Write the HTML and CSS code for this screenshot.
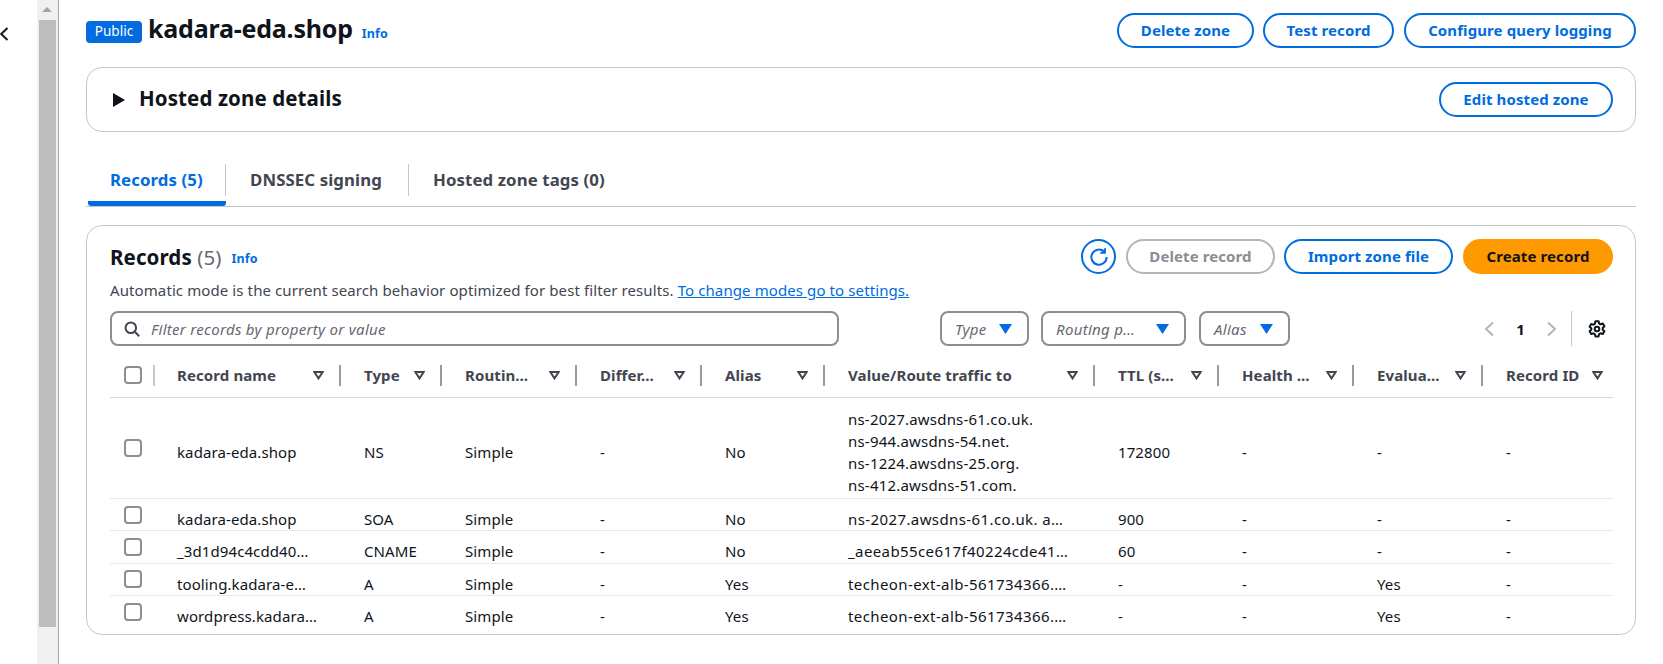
FILE: index.html
```html
<!DOCTYPE html>
<html lang="en">
<head>
<meta charset="utf-8">
<title>kadara-eda.shop</title>
<link rel="stylesheet" href="styles.css">
</head>
<body>
<div class="page">
  <div class="rail">
    <svg class="back" width="9" height="14" viewBox="0 0 9 14"><path d="M7.5 1 1.2 7l6.3 6" fill="none" stroke="#16191f" stroke-width="2"/></svg>
  </div>
  <div class="scrollbar">
    <div class="sb-arrow"></div>
    <div class="sb-thumb"></div>
  </div>
  <main class="main">
    <header class="top">
      <span class="badge">Public</span>
      <h1 class="title">kadara-eda.shop</h1>
      <a class="info info-top">Info</a>
      <div class="top-actions">
        <button class="btn w-delzone">Delete zone</button>
        <button class="btn w-test">Test record</button>
        <button class="btn w-config">Configure query logging</button>
      </div>
    </header>

    <section class="details">
      <svg class="caret" width="12" height="14" viewBox="0 0 12 14"><path d="M0 0 12 7 0 14Z" fill="#0f141a"/></svg>
      <h2 class="details-title">Hosted zone details</h2>
      <button class="btn w-edit">Edit hosted zone</button>
    </section>

    <nav class="tabs">
      <a class="tab tab-active tab-a"><span class="tab-label">Records (5)</span></a>
      <a class="tab tab-b"><span class="tab-label">DNSSEC signing</span></a>
      <a class="tab tab-c"><span class="tab-label">Hosted zone tags (0)</span></a>
    </nav>

    <section class="records">
      <div class="rec-head">
        <div class="rec-title-wrap">
          <h2 class="rec-title">Records <span class="rec-count">(5)</span></h2>
          <a class="info info-rec">Info</a>
        </div>
        <div class="rec-actions">
          <button class="icon-btn" aria-label="Refresh">
            <svg width="20" height="20" viewBox="0 0 20 20"><path d="M15.2 4.6A7.6 7.6 0 1 0 17.6 10" fill="none" stroke="#006ce0" stroke-width="2"/><path d="M15.9 1.2v4.6h-4.6" fill="none" stroke="#006ce0" stroke-width="2"/></svg>
          </button>
          <button class="btn btn-disabled w-delrec">Delete record</button>
          <button class="btn w-import">Import zone file</button>
          <button class="btn btn-primary w-create">Create record</button>
        </div>
      </div>
      <p class="rec-desc">Automatic mode is the current search behavior optimized for best filter results. <a class="link">To change modes go to settings.</a></p>
      <div class="filters">
        <div class="search">
          <svg width="16" height="16" viewBox="0 0 16 16"><circle cx="6.8" cy="6.8" r="5.3" fill="none" stroke="#424650" stroke-width="2"/><path d="m10.8 10.8 4.4 4.4" stroke="#424650" stroke-width="2"/></svg>
          <span class="placeholder">Filter records by property or value</span>
        </div>
        <div class="select w-type"><span class="placeholder">Type</span><svg class="tri" width="13" height="10" viewBox="0 0 13 10"><path d="M0 0h13L6.5 10Z" fill="#006ce0"/></svg></div>
        <div class="select w-routing"><span class="placeholder">Routing p…</span><svg class="tri" width="13" height="10" viewBox="0 0 13 10"><path d="M0 0h13L6.5 10Z" fill="#006ce0"/></svg></div>
        <div class="select w-alias"><span class="placeholder">Alias</span><svg class="tri" width="13" height="10" viewBox="0 0 13 10"><path d="M0 0h13L6.5 10Z" fill="#006ce0"/></svg></div>
        <div class="pager">
          <svg width="12" height="16" viewBox="0 0 12 16"><path d="M10 1.5 3 8l7 6.5" fill="none" stroke="#b4b4bb" stroke-width="2"/></svg>
          <span class="page-num">1</span>
          <svg width="12" height="16" viewBox="0 0 12 16"><path d="M2 1.5 9 8l-7 6.5" fill="none" stroke="#b4b4bb" stroke-width="2"/></svg>
          <span class="pager-sep"></span>
          <svg class="gear" width="18" height="18" viewBox="0 0 18 18"><path d="M7.4 1.2h3.2l.5 2.3 1.5.8 2.2-.8 1.6 2.8-1.7 1.6v1.8l1.7 1.6-1.6 2.8-2.2-.8-1.5.8-.5 2.3H7.4l-.5-2.3-1.5-.8-2.2.8-1.6-2.8 1.7-1.6V8.3L1.6 6.7l1.6-2.8 2.2.8 1.5-.8Z" fill="none" stroke="#0f141a" stroke-width="2" stroke-linejoin="round"/><circle cx="9" cy="9" r="2.3" fill="none" stroke="#0f141a" stroke-width="2"/></svg>
        </div>
      </div>
      <table class="table">
        <colgroup>
          <col class="c-check"><col class="c-name"><col class="c-type"><col class="c-routing"><col class="c-diff"><col class="c-alias"><col class="c-value"><col class="c-ttl"><col class="c-health"><col class="c-eval"><col class="c-id">
        </colgroup>
        <thead>
          <tr>
            <th><div class="th-in th-check"><span class="cb"></span></div></th>
            <th><div class="th-in"><span>Record name</span><svg class="sort" width="11" height="9" viewBox="0 0 11 9"><path d="M1.3 1h8.4L5.5 7.4Z" fill="none" stroke="#424650" stroke-width="2"/></svg></div></th>
            <th><div class="th-in"><span>Type</span><svg class="sort" width="11" height="9" viewBox="0 0 11 9"><path d="M1.3 1h8.4L5.5 7.4Z" fill="none" stroke="#424650" stroke-width="2"/></svg></div></th>
            <th><div class="th-in"><span>Routin…</span><svg class="sort" width="11" height="9" viewBox="0 0 11 9"><path d="M1.3 1h8.4L5.5 7.4Z" fill="none" stroke="#424650" stroke-width="2"/></svg></div></th>
            <th><div class="th-in"><span>Differ…</span><svg class="sort" width="11" height="9" viewBox="0 0 11 9"><path d="M1.3 1h8.4L5.5 7.4Z" fill="none" stroke="#424650" stroke-width="2"/></svg></div></th>
            <th><div class="th-in"><span>Alias</span><svg class="sort" width="11" height="9" viewBox="0 0 11 9"><path d="M1.3 1h8.4L5.5 7.4Z" fill="none" stroke="#424650" stroke-width="2"/></svg></div></th>
            <th><div class="th-in"><span>Value/Route traffic to</span><svg class="sort" width="11" height="9" viewBox="0 0 11 9"><path d="M1.3 1h8.4L5.5 7.4Z" fill="none" stroke="#424650" stroke-width="2"/></svg></div></th>
            <th><div class="th-in"><span>TTL (s…</span><svg class="sort" width="11" height="9" viewBox="0 0 11 9"><path d="M1.3 1h8.4L5.5 7.4Z" fill="none" stroke="#424650" stroke-width="2"/></svg></div></th>
            <th><div class="th-in"><span>Health …</span><svg class="sort" width="11" height="9" viewBox="0 0 11 9"><path d="M1.3 1h8.4L5.5 7.4Z" fill="none" stroke="#424650" stroke-width="2"/></svg></div></th>
            <th><div class="th-in"><span>Evalua…</span><svg class="sort" width="11" height="9" viewBox="0 0 11 9"><path d="M1.3 1h8.4L5.5 7.4Z" fill="none" stroke="#424650" stroke-width="2"/></svg></div></th>
            <th><div class="th-in th-last"><span>Record ID</span><svg class="sort" width="11" height="9" viewBox="0 0 11 9"><path d="M1.3 1h8.4L5.5 7.4Z" fill="none" stroke="#424650" stroke-width="2"/></svg></div></th>
          </tr>
        </thead>
        <tbody>
          <tr>
            <td class="td-check"><span class="cb"></span></td>
            <td>kadara-eda.shop</td><td>NS</td><td>Simple</td><td>-</td><td>No</td>
            <td class="td-multi">ns-2027.awsdns-61.co.uk.<br>ns-944.awsdns-54.net.<br>ns-1224.awsdns-25.org.<br>ns-412.awsdns-51.com.</td>
            <td>172800</td><td>-</td><td>-</td><td>-</td>
          </tr>
          <tr>
            <td class="td-check"><span class="cb"></span></td>
            <td>kadara-eda.shop</td><td>SOA</td><td>Simple</td><td>-</td><td>No</td>
            <td class="td-value">ns-2027.awsdns-61.co.uk. a…</td>
            <td>900</td><td>-</td><td>-</td><td>-</td>
          </tr>
          <tr>
            <td class="td-check"><span class="cb"></span></td>
            <td>_3d1d94c4cdd40…</td><td>CNAME</td><td>Simple</td><td>-</td><td>No</td>
            <td class="td-value">_aeeab55ce617f40224cde41…</td>
            <td>60</td><td>-</td><td>-</td><td>-</td>
          </tr>
          <tr>
            <td class="td-check"><span class="cb"></span></td>
            <td>tooling.kadara-e…</td><td>A</td><td>Simple</td><td>-</td><td>Yes</td>
            <td class="td-value">techeon-ext-alb-561734366.…</td>
            <td>-</td><td>-</td><td>Yes</td><td>-</td>
          </tr>
          <tr class="row-last">
            <td class="td-check"><span class="cb"></span></td>
            <td>wordpress.kadara…</td><td>A</td><td>Simple</td><td>-</td><td>Yes</td>
            <td class="td-value">techeon-ext-alb-561734366.…</td>
            <td>-</td><td>-</td><td>Yes</td><td>-</td>
          </tr>
        </tbody>
      </table>
    </section>
  </main>
</div>
</body>
</html>
```

FILE: styles.css
```css
* { box-sizing: border-box; }
html, body { margin: 0; padding: 0; background: #fff; }
body {
  font-family: "Noto Sans", "Open Sans", sans-serif;
  font-size: 15px;
  line-height: 20px;
  letter-spacing: 0.1px;
  color: #0f141a;
}
h1, h2, p { margin: 0; }
button { font-family: inherit; letter-spacing: inherit; cursor: pointer; }

.page { display: flex; width: 1663px; height: 664px; overflow: hidden; }

.rail { width: 37px; flex: none; padding-top: 27px; }
.back { display: block; }

.scrollbar {
  width: 22px;
  flex: none;
  background: #f0f0f0;
  border-right: 1px solid #a9a9a9;
  display: flex;
  flex-direction: column;
  align-items: flex-start;
}
.sb-arrow {
  flex: none;
  width: 0;
  height: 12px;
  margin: 0 0 8px 5px;
  border-left: 5px solid transparent;
  border-right: 5px solid transparent;
  border-bottom: 5px solid #a3a3a3;
  border-top: 7px solid transparent;
}
.sb-thumb { width: 17px; height: 607px; margin-left: 2px; background: #bdbdbd; }

.main { width: 1550px; margin-left: 27px; flex: none; }

/* Header */
.top { display: flex; align-items: center; height: 35px; margin-top: 13px; }
.badge {
  width: 56px;
  height: 22px;
  background: #006ce0;
  color: #fff;
  border-radius: 4px;
  font-size: 13.5px;
  line-height: 20px;
  letter-spacing: 0;
  text-align: center;
  margin: 2px 6px 0 0;
}
.title { font-size: 25px; line-height: 30px; font-weight: 700; letter-spacing: -0.2px; margin-top: -5px; }
.info { color: #006ce0; font-weight: 700; font-size: 12.5px; line-height: 16px; }
.info-top { margin-left: 9px; margin-top: 6px; }
.top-actions { margin-left: auto; display: flex; gap: 9px; }

.btn {
  height: 35px;
  border: 2px solid #006ce0;
  border-radius: 18px;
  background: #fff;
  color: #006ce0;
  font-size: 15px;
  font-weight: 700;
  line-height: 20px;
  padding: 0 0 2px;
  white-space: nowrap;
  text-align: center;
}
.w-delzone { width: 137px; }
.w-test { width: 131px; margin-right: 1px; }
.w-config { width: 232px; }
.w-edit { width: 174px; margin-left: auto; }
.w-delrec { width: 149px; }
.w-import { width: 169px; margin-right: 1px; }
.w-create { width: 150px; }
.btn-disabled { border-color: #b4b4bb; color: #8c8c94; }
.btn-primary { background: #ff9900; border-color: #ff9900; color: #0f141a; }

/* Details panel */
.details {
  display: flex;
  align-items: center;
  height: 65px;
  margin-top: 19px;
  padding: 0 22px 0 26px;
  border: 1px solid #c6c6cd;
  border-radius: 16px;
}
.caret { flex: none; }
.details-title { font-size: 20.5px; line-height: 24px; font-weight: 700; margin: 0 0 3px 14px; }

/* Tabs */
.tabs { display: flex; height: 75px; padding-top: 32px; border-bottom: 1px solid #c6c6cd; }
.tab { display: block; height: 42px; }
.tab-label {
  display: block;
  height: 32px;
  line-height: 32px;
  font-size: 16.8px;
  font-weight: 700;
  color: #424650;
  padding-left: 24px;
  white-space: nowrap;
}
.tab-a { width: 138px; border-bottom: 5px solid #006ce0; border-radius: 0 0 3px 3px; margin-left: 2px; }
.tab-a .tab-label { color: #006ce0; border-right: 1px solid #c6c6cd; padding-left: 22px; }
.tab-b { width: 183px; }
.tab-b .tab-label { border-right: 1px solid #c6c6cd; }
.tab-c { width: 240px; }

/* Records */
.records {
  margin-top: 18px;
  height: 410px;
  border: 1px solid #c6c6cd;
  border-radius: 16px;
  padding: 13px 22px 0 23px;
}
.rec-head { display: flex; justify-content: space-between; align-items: flex-start; height: 35px; }
.rec-title-wrap { display: flex; align-items: center; height: 35px; }
.rec-title { font-size: 20.5px; line-height: 24px; font-weight: 700; }
.rec-count { font-weight: 400; color: #656871; }
.info-rec { margin-left: 10px; margin-top: 4px; }
.rec-actions { display: flex; gap: 9px; }
.icon-btn {
  width: 35px;
  height: 35px;
  padding: 0;
  margin-right: 1px;
  border: 2px solid #006ce0;
  border-radius: 50%;
  background: #fff;
  display: flex;
  align-items: center;
  justify-content: center;
}
.rec-desc { margin-top: 6px; height: 20px; color: #424650; }
.link { color: #006ce0; text-decoration: underline; }

.filters { display: flex; align-items: center; margin-top: 11px; height: 35px; }
.search {
  width: 729px;
  height: 35px;
  display: flex;
  align-items: center;
  gap: 11px;
  padding: 0 12px;
  border: 2px solid #8c8c94;
  border-radius: 8px;
  margin-right: 101px;
}
.placeholder { font-style: italic; color: #656871; white-space: nowrap; letter-spacing: 0.3px; }
.select {
  height: 35px;
  display: flex;
  align-items: center;
  justify-content: space-between;
  padding: 0 15px 0 13px;
  border: 2px solid #8c8c94;
  border-radius: 8px;
}
.w-type { width: 89px; margin-right: 12px; }
.w-routing { width: 145px; margin-right: 13px; }
.w-alias { width: 91px; }
.pager { display: flex; align-items: center; height: 35px; margin-left: auto; padding-right: 7px; }
.page-num { width: 25px; margin: 0 13px 0 13px; text-align: center; font-weight: 700; }
.pager-sep { width: 1px; height: 35px; background: #c6c6cd; margin: 0 16px 0 13px; }
.gear { display: block; }

/* Table */
.table { width: 1503px; border-collapse: separate; border-spacing: 0; table-layout: fixed; }
.c-check { width: 43px; }
.c-name { width: 187px; }
.c-type { width: 101px; }
.c-routing { width: 135px; }
.c-diff { width: 125px; }
.c-alias { width: 123px; }
.c-value { width: 270px; }
.c-ttl { width: 124px; }
.c-health { width: 135px; }
.c-eval { width: 129px; }
.c-id { width: 131px; }

th { padding: 19px 0 11px; border-bottom: 1px solid #d5d5da; font-weight: 700; text-align: left; color: #424650; }
.th-in {
  display: flex;
  align-items: center;
  justify-content: space-between;
  height: 21px;
  margin-right: -1px;
  padding: 0 15px 0 24px;
  border-right: 2px solid #9a9aa2;
  white-space: nowrap;
}
.th-in span { margin-bottom: 2px; }
.th-check { margin-right: -2px; padding: 0 0 0 14px; justify-content: flex-start; border-right-color: #c6c6cd; }
.th-last { border-right: 0; margin-right: 0; padding-right: 10px; }
.sort { flex: none; }
td {
  padding: 10px 0 0 24px;
  line-height: 21.3px;
  border-bottom: 1px solid #e8e8ea;
  color: #0f141a;
  white-space: nowrap;
  vertical-align: middle;
}
.td-multi { line-height: 22px; padding-bottom: 2px; letter-spacing: 0.2px; }
.td-value { letter-spacing: 0.4px; }
.row-last td { border-bottom: 0; }
.td-check { padding: 0 0 0 14px; }
.cb {
  display: block;
  width: 18px;
  height: 18px;
  border: 2px solid #8c8c94;
  border-radius: 4px;
  background: #fff;
}
```
